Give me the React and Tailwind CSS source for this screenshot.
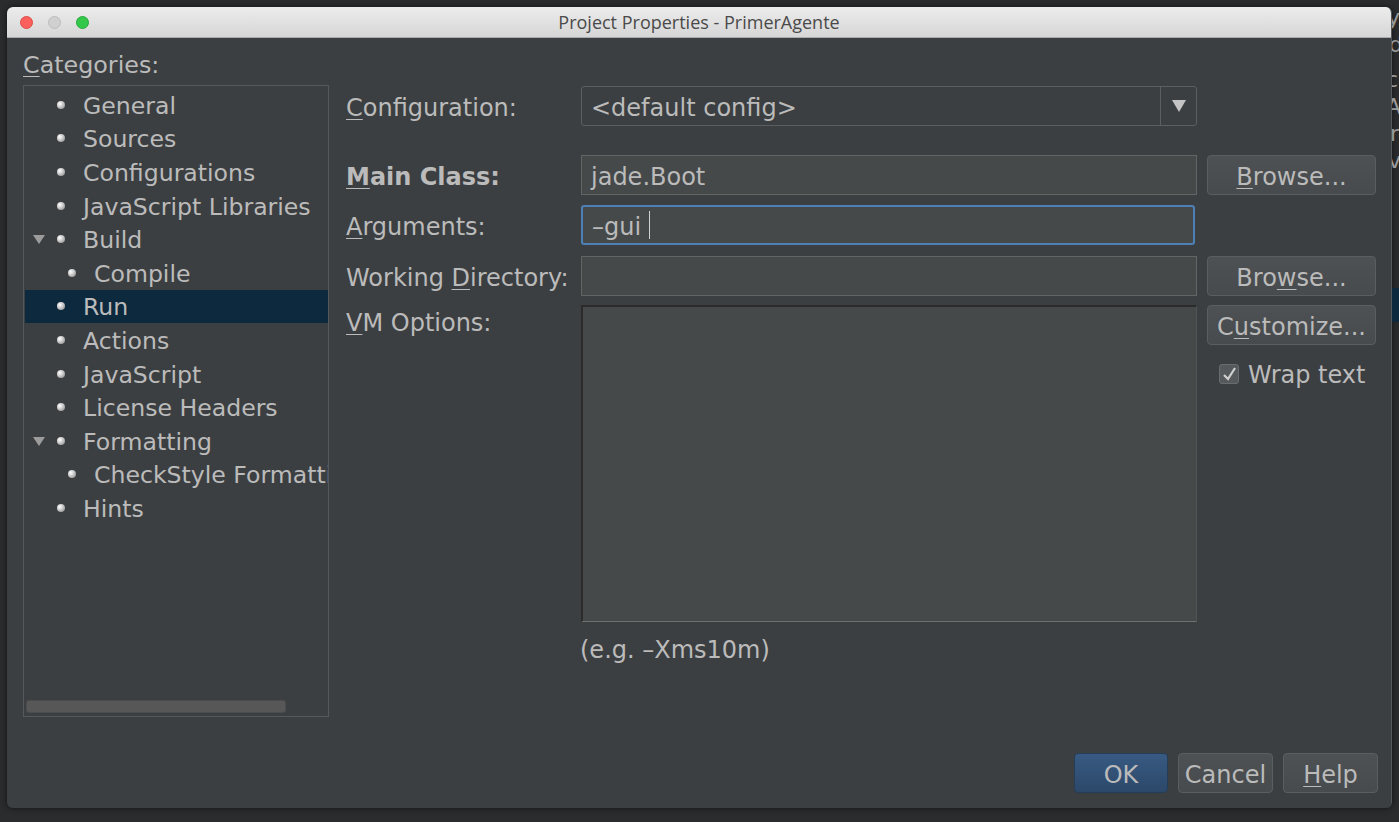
import React from "react";

const font = { fontFamily: '"DejaVu Sans", "Liberation Sans", sans-serif' };

const categories = [
  { label: "General", level: 1 },
  { label: "Sources", level: 1 },
  { label: "Configurations", level: 1 },
  { label: "JavaScript Libraries", level: 1 },
  { label: "Build", level: 1, open: true },
  { label: "Compile", level: 2 },
  { label: "Run", level: 1, selected: true },
  { label: "Actions", level: 1 },
  { label: "JavaScript", level: 1 },
  { label: "License Headers", level: 1 },
  { label: "Formatting", level: 1, open: true },
  { label: "CheckStyle Formatting", level: 2 },
  { label: "Hints", level: 1 },
];

const Bullet = () => (
  <span className="w-[8px] h-[8px] rounded-full shrink-0 bg-[radial-gradient(circle_at_35%_35%,#ffffff,#c8c8c8_45%,#7a7a7a)]" />
);

const Mn = ({ children }) => (
  <span className="underline underline-offset-[3px] decoration-1">{children}</span>
);

const TreeRow = ({ item }) => (
  <div
    className={`flex items-center h-[33.6px] whitespace-nowrap ${
      item.selected ? "bg-[#0d293e]" : ""
    }`}
  >
    <div className="w-[32px] shrink-0 flex items-center">
      {item.open && (
        <svg width="12" height="10" viewBox="0 0 12 10" className="ml-[8px]">
          <polygon points="0,1 12,1 6,10" fill="#9c9c9c" />
        </svg>
      )}
    </div>
    {item.level === 2 && <div className="w-[11px] shrink-0" />}
    <Bullet />
    <span className="ml-[18px] mt-[2px] text-[#bbbbbb] text-[23.6px] leading-[30px]">{item.label}</span>
  </div>
);

const Button = ({ children, primary, className = "" }) => (
  <div
    className={`h-[40px] pt-[3px] rounded-[4px] border flex items-center justify-center text-[24px] leading-[30px] text-[#bbbbbb] ${
      primary
        ? "bg-[linear-gradient(#385a82,#2c4869)] border-[#263d59]"
        : "bg-[linear-gradient(#4d5153,#474b4d)] border-[#5a5e60]"
    } ${className}`}
  >
    {children}
  </div>
);

const Field = ({ children, focused }) => (
  <div
    className={`h-[40px] pt-[3px] flex items-center pl-[9px] text-[24px] leading-[30px] text-[#bbbbbb] ${
      focused
        ? "bg-[#45494a] border-2 border-[#4e80b8] rounded-[3px] w-[614px]"
        : "bg-[#45494a] border border-[#646464] w-[616px]"
    }`}
  >
    {children}
  </div>
);

export default function App() {
  return (
    <div
      style={font}
      className="w-[1399px] h-[822px] bg-[#2a2c2e] overflow-hidden flex pt-[7px] pl-[7px]"
    >
      <div className="w-[1385px] h-[801px] shrink-0 flex flex-col rounded-[6px] overflow-hidden border-r border-[#55585a] shadow-[0_0_6px_rgba(0,0,0,0.6)]">
        {/* title bar */}
        <div className="h-[31px] shrink-0 grid grid-cols-[1fr_auto_1fr] items-center bg-[linear-gradient(#ececec,#d6d6d6)] border-b border-[#ababab]">
          <div className="flex items-center gap-[15px] pl-[13px]">
            <span className="w-[13px] h-[13px] rounded-full bg-[#fc605c] border border-[#de4b45]" />
            <span className="w-[13px] h-[13px] rounded-full bg-[#d0d0d0] border border-[#bcbcbc]" />
            <span className="w-[13px] h-[13px] rounded-full bg-[#34c84a] border border-[#27a93a]" />
          </div>
          <div
            className="text-[18px] leading-[22px] text-[#4a4a4a]"
            style={{ fontFamily: '"Open Sans", "DejaVu Sans", sans-serif' }}
          >
            Project Properties - PrimerAgente
          </div>
          <div />
        </div>

        {/* body */}
        <div className="flex-1 bg-[#3c3f41] flex flex-col">
          <div className="flex h-[679px]">
            {/* categories */}
            <div className="pl-[16px] pt-[13px] flex flex-col">
              <div className="h-[28px] leading-[28px] text-[23.8px] text-[#bbbbbb]">
                <Mn>C</Mn>ategories:
              </div>
              <div className="mt-[6px] w-[306px] h-[632px] border border-[#56595b] flex flex-col overflow-hidden">
                <div className="pt-[2px] pl-[1px]">
                  {categories.map((c) => (
                    <TreeRow key={c.label} item={c} />
                  ))}
                </div>
                <div className="flex-1" />
                <div className="ml-[2px] mb-[3px] w-[260px] h-[13px] rounded-[3px] bg-[#575757] border border-[#4c4c4c]" />
              </div>
            </div>

            {/* form */}
            <div className="ml-[17px] pt-[48px] flex flex-col text-[24px] leading-[30px] text-[#bbbbbb]">
              <div className="flex items-center">
                <div className="w-[235px] mt-[4px]">
                  <Mn>C</Mn>onfiguration:
                </div>
                <div className="w-[616px] h-[40px] rounded-[3px] border border-[#5c5f61] flex items-center">
                  <div className="flex-1 pl-[9px] pt-[3px]">&lt;default config&gt;</div>
                  <div className="w-[36px] h-full border-l border-[#5c5f61] flex items-center justify-center">
                    <svg width="14" height="12" viewBox="0 0 14 12">
                      <polygon points="0,0 14,0 7,12" fill="#c4c4c4" />
                    </svg>
                  </div>
                </div>
              </div>

              <div className="flex items-center mt-[29px]">
                <div className="w-[235px] mt-[4px] font-bold">
                  <Mn>M</Mn>ain Class:
                </div>
                <Field>jade.Boot</Field>
                <Button className="ml-[10px] w-[169px]">
                  <Mn>B</Mn>rowse...
                </Button>
              </div>

              <div className="flex items-center mt-[10px]">
                <div className="w-[235px] mt-[4px]">
                  <Mn>A</Mn>rguments:
                </div>
                <Field focused>
                  –gui
                  <span className="ml-[8px] -mt-[3px] w-[1px] h-[28px] bg-[#d0d0d0]" />
                </Field>
              </div>

              <div className="flex items-center mt-[11px]">
                <div className="w-[235px] mt-[4px] whitespace-nowrap">
                  Working <Mn>D</Mn>irectory:
                </div>
                <Field />
                <Button className="ml-[10px] w-[169px]">
                  Bro<Mn>w</Mn>se...
                </Button>
              </div>

              <div className="flex items-start mt-[9px]">
                <div className="w-[235px] mt-[3px] h-[30px] leading-[30px]">
                  <Mn>V</Mn>M Options:
                </div>
                <div className="w-[616px] h-[317px] bg-[#45494a] border-t-2 border-l-2 border-[#2b2b2b] border-b border-b-[#707070] border-r border-r-[#505354]" />
                <div className="ml-[10px] flex flex-col">
                  <Button className="w-[169px]">
                    C<Mn>u</Mn>stomize...
                  </Button>
                  <div className="flex items-center mt-[13px] ml-[12px]">
                    <div className="w-[20px] h-[20px] rounded-[3px] bg-[#55595b] border border-[#6a6d6f] flex items-center justify-center">
                      <svg width="15" height="15" viewBox="0 0 15 15">
                        <path d="M2 8 L6 12 L13 1" stroke="#cfcfcf" strokeWidth="2.2" fill="none" />
                      </svg>
                    </div>
                    <span className="ml-[9px] mt-[2px]">Wrap text</span>
                  </div>
                </div>
              </div>

              <div className="ml-[234px] mt-[13px] h-[30px] leading-[30px]">(e.g. –Xms10m)</div>
            </div>
          </div>

          {/* bottom buttons */}
          <div className="flex justify-end gap-[10px] pr-[13px] mt-[36px]">
            <Button primary className="w-[94px]">OK</Button>
            <Button className="w-[95px]">Cancel</Button>
            <Button className="w-[95px]">
              <Mn>H</Mn>elp
            </Button>
          </div>
        </div>
      </div>

      {/* window behind, peeking out on the right */}
      <div className="w-[7px] h-[822px] -mt-[7px] overflow-hidden flex flex-col text-[22px] text-[#9a9a9a] shrink-0">
        <div className="h-[4px]" />
        <div className="h-[27px] leading-[27px] -ml-[5px]">y</div>
        <div className="h-[27px] leading-[27px] -ml-[3px]">d</div>
        <div className="h-[8px]" />
        <div className="h-[27px] leading-[27px] -ml-[6px]">c</div>
        <div className="h-[27px] leading-[27px] -ml-[6px]">A</div>
        <div className="h-[27px] leading-[27px] -ml-[2px]">ra</div>
        <div className="h-[27px] leading-[27px] -ml-[4px]">v.</div>
        <div className="h-[114px]" />
        <div className="h-[34px] bg-[#0d293e]" />
      </div>
    </div>
  );
}
